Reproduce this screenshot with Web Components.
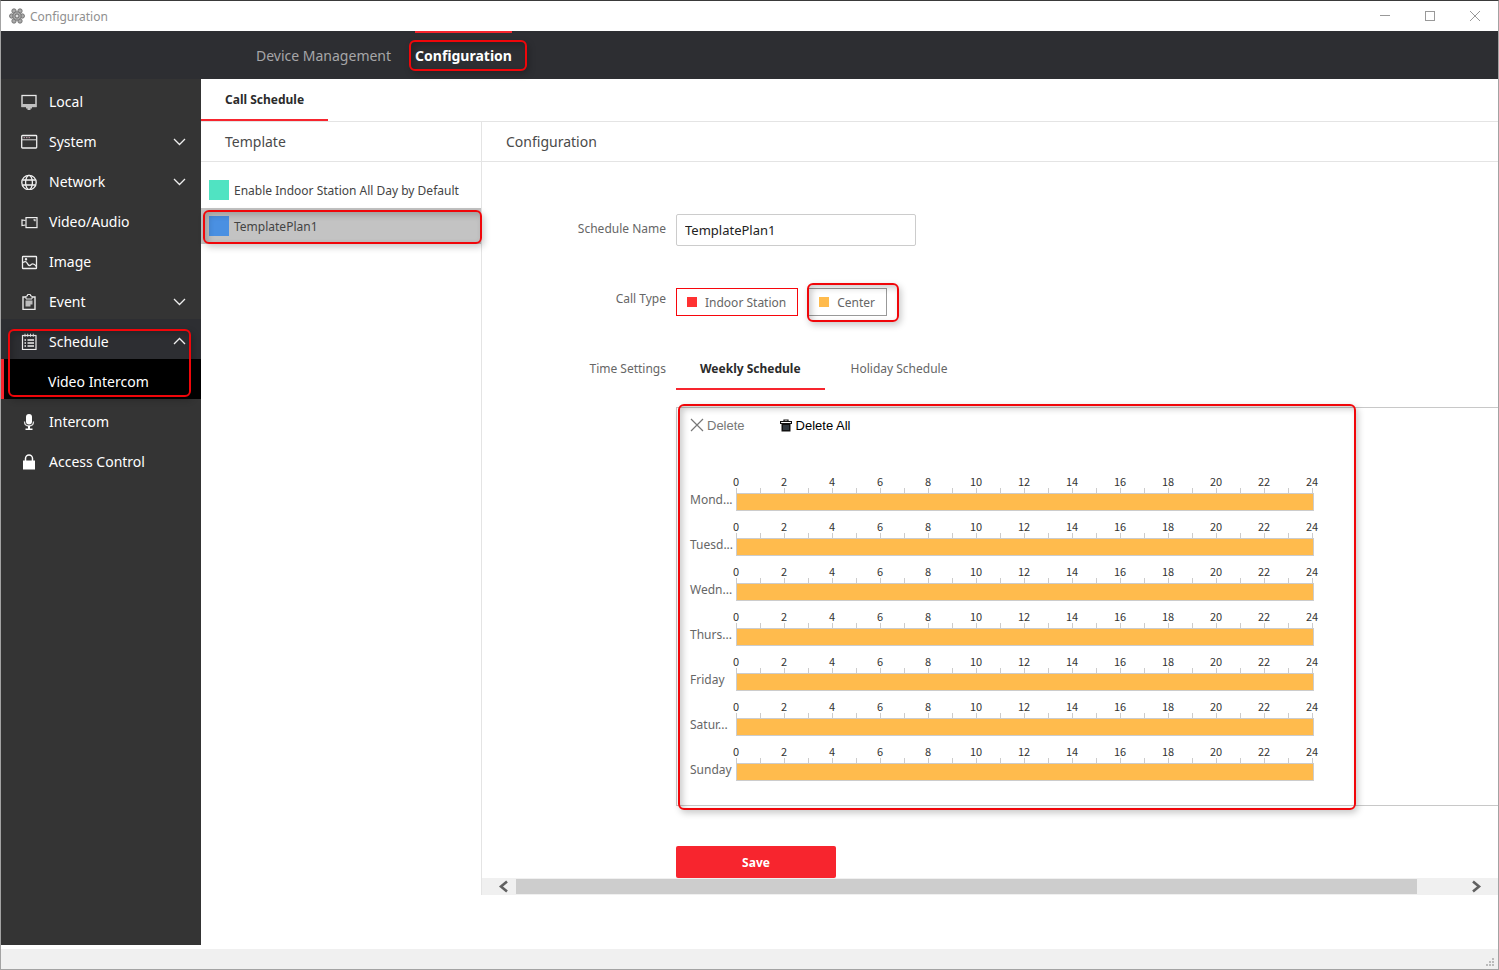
<!DOCTYPE html>
<html lang="en">
<head>
<meta charset="utf-8">
<title>Configuration</title>
<style>
  html, body { margin: 0; height: 100%; }
  body { font-family: "Noto Sans", "Open Sans", sans-serif; font-size: 13px; color: #444; background: #fff; }
</style>
</head>
<body>
<app-window></app-window>

<script>
const define = (name, html, setup) => {
  const template = document.createElement('template');
  template.innerHTML = html;
  customElements.define(name, class extends HTMLElement {
    constructor() {
      super();
      this.attachShadow({ mode: 'open' }).append(template.content.cloneNode(true));
    }
    connectedCallback() { if (setup) setup(this, this.shadowRoot); }
  });
};

const ICONS = {
  local: '<rect x="1" y="1.500" width="14" height="11" fill="none" stroke="#e8e8e8" stroke-width="1.300"/><path d="M1 10h14v3H1zM5 13h6v1.500H9.500V16h-3v-1.500H5z" fill="#c0c0c0"/>',
  system: '<rect x=".7" y="1.500" width="15" height="12.500" rx=".8" fill="none" stroke="#eee" stroke-width="1.300"/><path d="M1 5.800h14.500" stroke="#ddd"/><path d="M2.500 3.700h1.500M5 3.700h1.500M7.500 3.700H9" stroke="#c8a0b0"/>',
  network: '<g fill="none" stroke="#f0f0f0" stroke-width="1.300"><circle cx="8" cy="8.500" r="7.200"/><ellipse cx="8" cy="8.500" rx="3.400" ry="7.200"/><path d="M1.500 6h13M1.500 11h13"/></g>',
  video: '<g fill="none" stroke="#eee" stroke-width="1.200"><rect x="5" y="3.600" width="11" height="10"/><path d="M4.500 6.500 1 6v5.500l3.500-.5"/><path d="M12.500 5.800h1.500v1.500"/></g>',
  image: '<g fill="none" stroke="#eee" stroke-width="1.300"><rect x="1.500" y="2.500" width="14" height="12" rx=".6"/><path d="M2 8.500c3-2 3.500-.5 5 2 1.500 2 2.500.5 3.500-.2s3-.3 5 2.200"/><circle cx="5" cy="5.200" r=".6"/></g>',
  event: '<path d="M5 3H2v12.500h12V3h-3" fill="none" stroke="#e8e8e8" stroke-width="1.400"/><path d="M5 2h1.500V.5h3V2H11v3H5z" fill="none" stroke="#e8e8e8"/><path d="M4.500 6.500h7v4H9.500v2h-5z" fill="#bbb"/>',
  schedule: '<rect x="1.500" y="1.500" width="13.500" height="14" fill="none" stroke="#eee" stroke-width="1.200"/><path d="M4-.3v3M6.700-.3v3M9.500-.3v3M12.300-.3v3" stroke="#eee"/><path d="M6.500 6H13M6.500 9H13M6.500 12H13" stroke="#eee" stroke-width="1.300"/><path d="M3.500 6H5M3.500 9H5M3.500 12H5" stroke="#eee" stroke-width="1.300"/>',
  intercom: '<rect x="5" y="0" width="6" height="10.500" rx="3" fill="#fff"/><path d="M3.500 7.500c0 6 9 6 9 0" fill="none" stroke="#ddd" stroke-width="1.300"/><path d="M7 12h2v2.500h2.500V16h-7v-1.500H7z" fill="#fff"/>',
  access: '<path d="M4.500 7V4.500a3.500 3.500 0 0 1 7 0V7" fill="none" stroke="#fff" stroke-width="1.500"/><path d="M2 6.500h12v9H2z" fill="#fff"/>'
};

/* Rounded highlight laid over whatever positioned box holds it. */
define('focus-frame', `
  <style>
    :host { position: absolute; inset: var(--frame-inset, 0); box-sizing: border-box; z-index: 2;
      border: 2px solid #f0060a; border-radius: 6px; pointer-events: none;
      box-shadow: 2px 3px 7px rgba(0,0,0,.22), inset 3px 3px 6px rgba(0,0,0,.2); }
  </style>`);

define('title-bar', `
  <style>
    :host { display: flex; align-items: center; height: 30px; padding-left: 8px; background: #fff; color: #8f8f8f; font-size: 12px; }
    span { flex: 1; margin-left: 5px; }
    button { border: 0; background: none; padding: 0; width: 45px; height: 30px; display: grid; place-items: center; }
    svg { display: block; }
  </style>
  <svg width="16" height="16" viewBox="0 0 16 16"><g fill="#aaa" stroke="#666" stroke-width=".8"><circle cx="5" cy="3" r="2.200"/><circle cx="11" cy="3" r="2.200"/><circle cx="2.700" cy="8" r="2.200"/><circle cx="13.300" cy="8" r="2.200"/><circle cx="5" cy="13" r="2.200"/><circle cx="11" cy="13" r="2.200"/><circle cx="8" cy="8" r="4.200"/></g><circle cx="8" cy="8" r="2" fill="#ddd" stroke="#555" stroke-width=".8"/></svg>
  <span>Configuration</span>
  <button aria-label="Minimize"><svg width="11" height="11"><path d="M0 4.500h10" stroke="#999"/></svg></button>
  <button aria-label="Maximize"><svg width="11" height="11"><rect x=".5" y=".5" width="9" height="9" fill="none" stroke="#999"/></svg></button>
  <button aria-label="Close"><svg width="11" height="11"><path d="m0 0 10 10m0-10-10 10" stroke="#999"/></svg></button>`);

define('top-nav', `
  <style>
    :host { display: block; background: #2d2e32; font-size: 14px; }
    nav { display: flex; height: 48px; padding-left: 255px; gap: 24px; }
    a { position: relative; box-sizing: border-box; color: #a6a6a8; text-decoration: none; line-height: 46px; border-top: 2px solid transparent; }
    a.on { color: #fff; font-weight: 700; border-color: #f7252e; }
    focus-frame { --frame-inset: 7px -15px 8px -6px; }
  </style>
  <nav><a href="#devices">Device Management</a><a class="on" href="#configuration">Configuration<focus-frame></focus-frame></a></nav>`);

define('nav-item', `
  <style>
    :host { display: block; }
    a { display: flex; align-items: center; box-sizing: border-box; height: 40px; padding: 5px 14px 0 20px; color: #fff; text-decoration: none; font-size: 14px; }
    .text { flex: 1; margin-left: 11px; }
    svg { display: block; }
    :host([open]) a { background: #2d2e32; }
    :host([current]) a { background: #000; border-left: 3px solid #f7252e; padding-left: 44px; }
    :host([current]) .text { margin-left: 0; }
    :host([current]) .icon { display: none; }
    .arrow { display: none; }
    :host([expands]) .arrow { display: block; }
    :host([open]) .arrow { transform: scaleY(-1); }
  </style>
  <a href="#"><svg class="icon" width="17" height="17" viewBox="0 -1 17 17"></svg><span class="text"><slot></slot></span>
  <svg class="arrow" width="15" height="9"><path d="m2 2 5.500 5.500L13 2" fill="none" stroke="#eee" stroke-width="1.300"/></svg></a>`,
  (el, root) => {
    root.querySelector('.icon').innerHTML = ICONS[el.getAttribute('icon')] || '';
    root.querySelector('a').href = '#' + el.textContent.trim().toLowerCase().replace(/\W+/g, '-');
  });

define('side-nav', `
  <style>
    :host { display: block; background: #343434; }
    .group { position: relative; }
    focus-frame { --frame-inset: 10px 10px 2px 7px; }
  </style>
  <nav>
    <nav-item icon="local">Local</nav-item>
    <nav-item icon="system" expands>System</nav-item>
    <nav-item icon="network" expands>Network</nav-item>
    <nav-item icon="video">Video/Audio</nav-item>
    <nav-item icon="image">Image</nav-item>
    <nav-item icon="event" expands>Event</nav-item>
    <div class="group">
      <nav-item icon="schedule" expands open>Schedule</nav-item>
      <nav-item current>Video Intercom</nav-item>
      <focus-frame></focus-frame>
    </div>
    <nav-item icon="intercom">Intercom</nav-item>
    <nav-item icon="access">Access Control</nav-item>
  </nav>`);

define('tab-button', `
  <style>
    :host { display: block; }
    button { box-sizing: border-box; height: 42px; padding: 0 24px; border: 0; border-bottom: 2px solid transparent; background: none; font: inherit; color: #666; }
    :host([selected]) button { font-weight: 700; color: #2b2b2b; border-color: #f7252e; font-size: 12px; }
  </style>
  <button type="button"><slot></slot></button>`);

define('pane-header', `
  <style>:host { display: block; height: 39px; line-height: 39px; padding: 0 24px; border-bottom: 1px solid #e4e4e4; font-size: 14px; color: #4a4a4a; }</style>
  <slot></slot>`);

define('template-item', `
  <style>
    :host { display: block; position: relative; }
    button { display: flex; align-items: center; gap: 5px; width: 100%; height: 36px; padding: 0 8px; border: 0; background: none; font: inherit; font-size: 12px; color: #444; white-space: nowrap; }
    :host([selected]) button { background: #c3c3c3; }
    i { width: 20px; height: 20px; background: var(--swatch); }
    focus-frame { display: none; --frame-inset: 2px -1px 0 2px; }
    :host([selected]) focus-frame { display: block; }
  </style>
  <button type="button"><i></i><slot></slot></button><focus-frame></focus-frame>`,
  (el) => el.style.setProperty('--swatch', el.getAttribute('color')));

define('template-list', `
  <style>:host { display: block; border-right: 1px solid #e4e4e4; } div { padding-top: 10px; }</style>
  <pane-header>Template</pane-header>
  <div>
    <template-item color="#50e3c2">Enable Indoor Station All Day by Default</template-item>
    <template-item color="#4a90e2" selected>TemplatePlan1</template-item>
  </div>`);

define('type-button', `
  <style>
    :host { display: block; position: relative; }
    button { display: flex; align-items: center; gap: 8px; height: 28px; padding: 0 11px 0 10px; border: 1px solid #999; background: none; font: inherit; font-size: 12px; color: #666; white-space: nowrap; }
    :host([selected]) button { border-color: #f7060c; }
    i { width: 10px; height: 10px; background: var(--swatch); }
  </style>
  <button type="button"><i></i><slot></slot></button><slot name="frame"></slot>`,
  (el) => el.style.setProperty('--swatch', el.getAttribute('color')));

define('day-row', `
  <style>
    :host { display: grid; grid-template-columns: 46px 578px; height: 45px; }
    .day { padding-top: 16px; line-height: 18px; font-size: 12px; color: #666; white-space: nowrap; }
    .hours { display: flex; margin: 0 -22px 0 -24px; font: 11px/13px "Noto Sans CJK SC", sans-serif; color: #333; }
    .hours span { flex: 1; text-align: center; }
    .ticks { height: 5px; margin-right: 1px; background: repeating-linear-gradient(90deg, #ccc 0 1px, transparent 1px 24px); }
    .bar { box-sizing: border-box; height: 18px; background: #ffbb4d; border: 1px solid #ccc; }
  </style>
  <span class="day"><slot></slot></span>
  <div><div class="hours"></div><div class="ticks"></div><div class="bar"></div></div>`,
  (el, root) => {
    root.querySelector('.hours').innerHTML = Array.from({ length: 13 }, (_, i) => `<span>${i * 2}</span>`).join('');
  });

define('week-schedule', `
  <style>
    :host { display: block; position: relative; border: 1px solid #c8c8c8; border-right: 0; padding: 8px 0 15px 13px; }
    .tools { display: flex; gap: 35px; margin-bottom: 39px; }
    button { display: flex; align-items: center; gap: 4px; height: 20px; padding: 0; border: 0; background: none; font: 13px/20px "Liberation Sans", sans-serif; color: #000; }
    button.off { color: #777; gap: 3px; }
    svg { margin-bottom: 2px; }
    focus-frame { --frame-inset: -4px auto -5px 1px; width: 678px; }
  </style>
  <div class="tools">
    <button type="button" class="off"><svg width="14" height="14"><path d="m1 1 12 12M13 1 1 13" stroke="#777" stroke-width="1.200"/></svg>Delete</button>
    <button type="button"><svg width="12" height="13"><path d="M.5 2.500h11v2H.5zM4 3V1h4v2" fill="none" stroke="#111" stroke-width="1.200"/><path d="M1.500 4h9v8.500h-9z" fill="#111"/><path d="M4 6v5M6 6v5M8 6v5" stroke="#678" stroke-width=".8"/></svg>Delete All</button>
  </div>
  <day-row title="Monday">Mond...</day-row>
  <day-row title="Tuesday">Tuesd...</day-row>
  <day-row title="Wednesday">Wedn...</day-row>
  <day-row title="Thursday">Thurs...</day-row>
  <day-row title="Friday">Friday</day-row>
  <day-row title="Saturday">Satur...</day-row>
  <day-row title="Sunday">Sunday</day-row>
  <focus-frame></focus-frame>`);

define('scroll-strip', `
  <style>
    :host { display: flex; align-items: center; height: 17px; background: #f0f0f0; }
    svg { flex: none; }
    .track { flex: 1; height: 15px; }
    .thumb { width: 96%; height: 15px; background: #cdcdcd; }
  </style>
  <svg width="34" height="17"><path d="M25 3.500 19 8.500l6 5" fill="none" stroke="#606060" stroke-width="2.600"/></svg>
  <div class="track"><div class="thumb"></div></div>
  <svg width="43" height="17"><path d="m18 3.500 6 5-6 5" fill="none" stroke="#606060" stroke-width="2.600"/></svg>`);

define('config-form', `
  <style>
    :host { display: block; min-width: 0; }
    form { display: grid; grid-template-columns: 184px minmax(0, 1fr); column-gap: 10px; padding-top: 52px; color: #666; font-size: 12px; }
    label, .label { text-align: right; line-height: 20px; padding-top: 5px; }
    input { box-sizing: border-box; width: 240px; height: 32px; padding: 0 8px; border: 1px solid #ccc; border-radius: 2px; font: inherit; font-size: 13px; color: #222; background: #fff; }
    .types { display: flex; gap: 10px; margin-top: 42px; }
    .types focus-frame { --frame-inset: -5px -12px -6px -1px; }
    .types-label { margin-top: 43px; padding-top: 0; }
    .tabs { display: flex; gap: 2px; margin-top: 32px; }
    .tabs-label { margin-top: 43px; padding-top: 0; }
    week-schedule { grid-column: 2; margin-top: 17px; }
    .save { grid-column: 2; justify-self: start; width: 160px; height: 32px; margin-top: 40px; border: 0; border-radius: 2px; background: #f7252e; color: #fff; font: inherit; font-weight: 700; }
  </style>
  <pane-header>Configuration</pane-header>
  <form>
    <label for="name">Schedule Name</label><div><input id="name" value="TemplatePlan1"></div>
    <span class="label types-label">Call Type</span>
    <div class="types">
      <type-button color="#ff3232" selected>Indoor Station</type-button>
      <type-button color="#ffbb4d">Center<focus-frame slot="frame"></focus-frame></type-button>
    </div>
    <span class="label tabs-label">Time Settings</span>
    <div class="tabs"><tab-button selected>Weekly Schedule</tab-button><tab-button>Holiday Schedule</tab-button></div>
    <week-schedule></week-schedule>
    <button type="button" class="save">Save</button>
  </form>
  <scroll-strip></scroll-strip>`);

define('app-window', `
  <style>
    :host { display: grid; grid-template-rows: auto auto 1fr auto; box-sizing: border-box; min-height: 100vh; border: 1px solid #a3a3a3; border-top-color: #3a3a3a; }
    .body { display: grid; grid-template-columns: 200px minmax(0, 1fr); }
    side-nav { margin-bottom: 4px; }
    .tabs { display: flex; border-bottom: 1px solid #e4e4e4; }
    .panes { display: grid; grid-template-columns: 281px minmax(0, 1fr); }
    footer { display: flex; justify-content: flex-end; align-items: flex-end; height: 20px; background: #f0f0f0; }
  </style>
  <title-bar></title-bar>
  <top-nav></top-nav>
  <div class="body">
    <side-nav></side-nav>
    <main>
      <div class="tabs"><tab-button selected>Call Schedule</tab-button></div>
      <div class="panes"><template-list></template-list><config-form></config-form></div>
    </main>
  </div>
  <footer><svg width="12" height="12"><path d="M6 1h2v2H6zM6 4h2v2H6zM3 4h2v2H3zM6 7h2v2H6zM3 7h2v2H3zM0 7h2v2H0z" fill="#bbb"/></svg></footer>`);
</script>
</body>
</html>
